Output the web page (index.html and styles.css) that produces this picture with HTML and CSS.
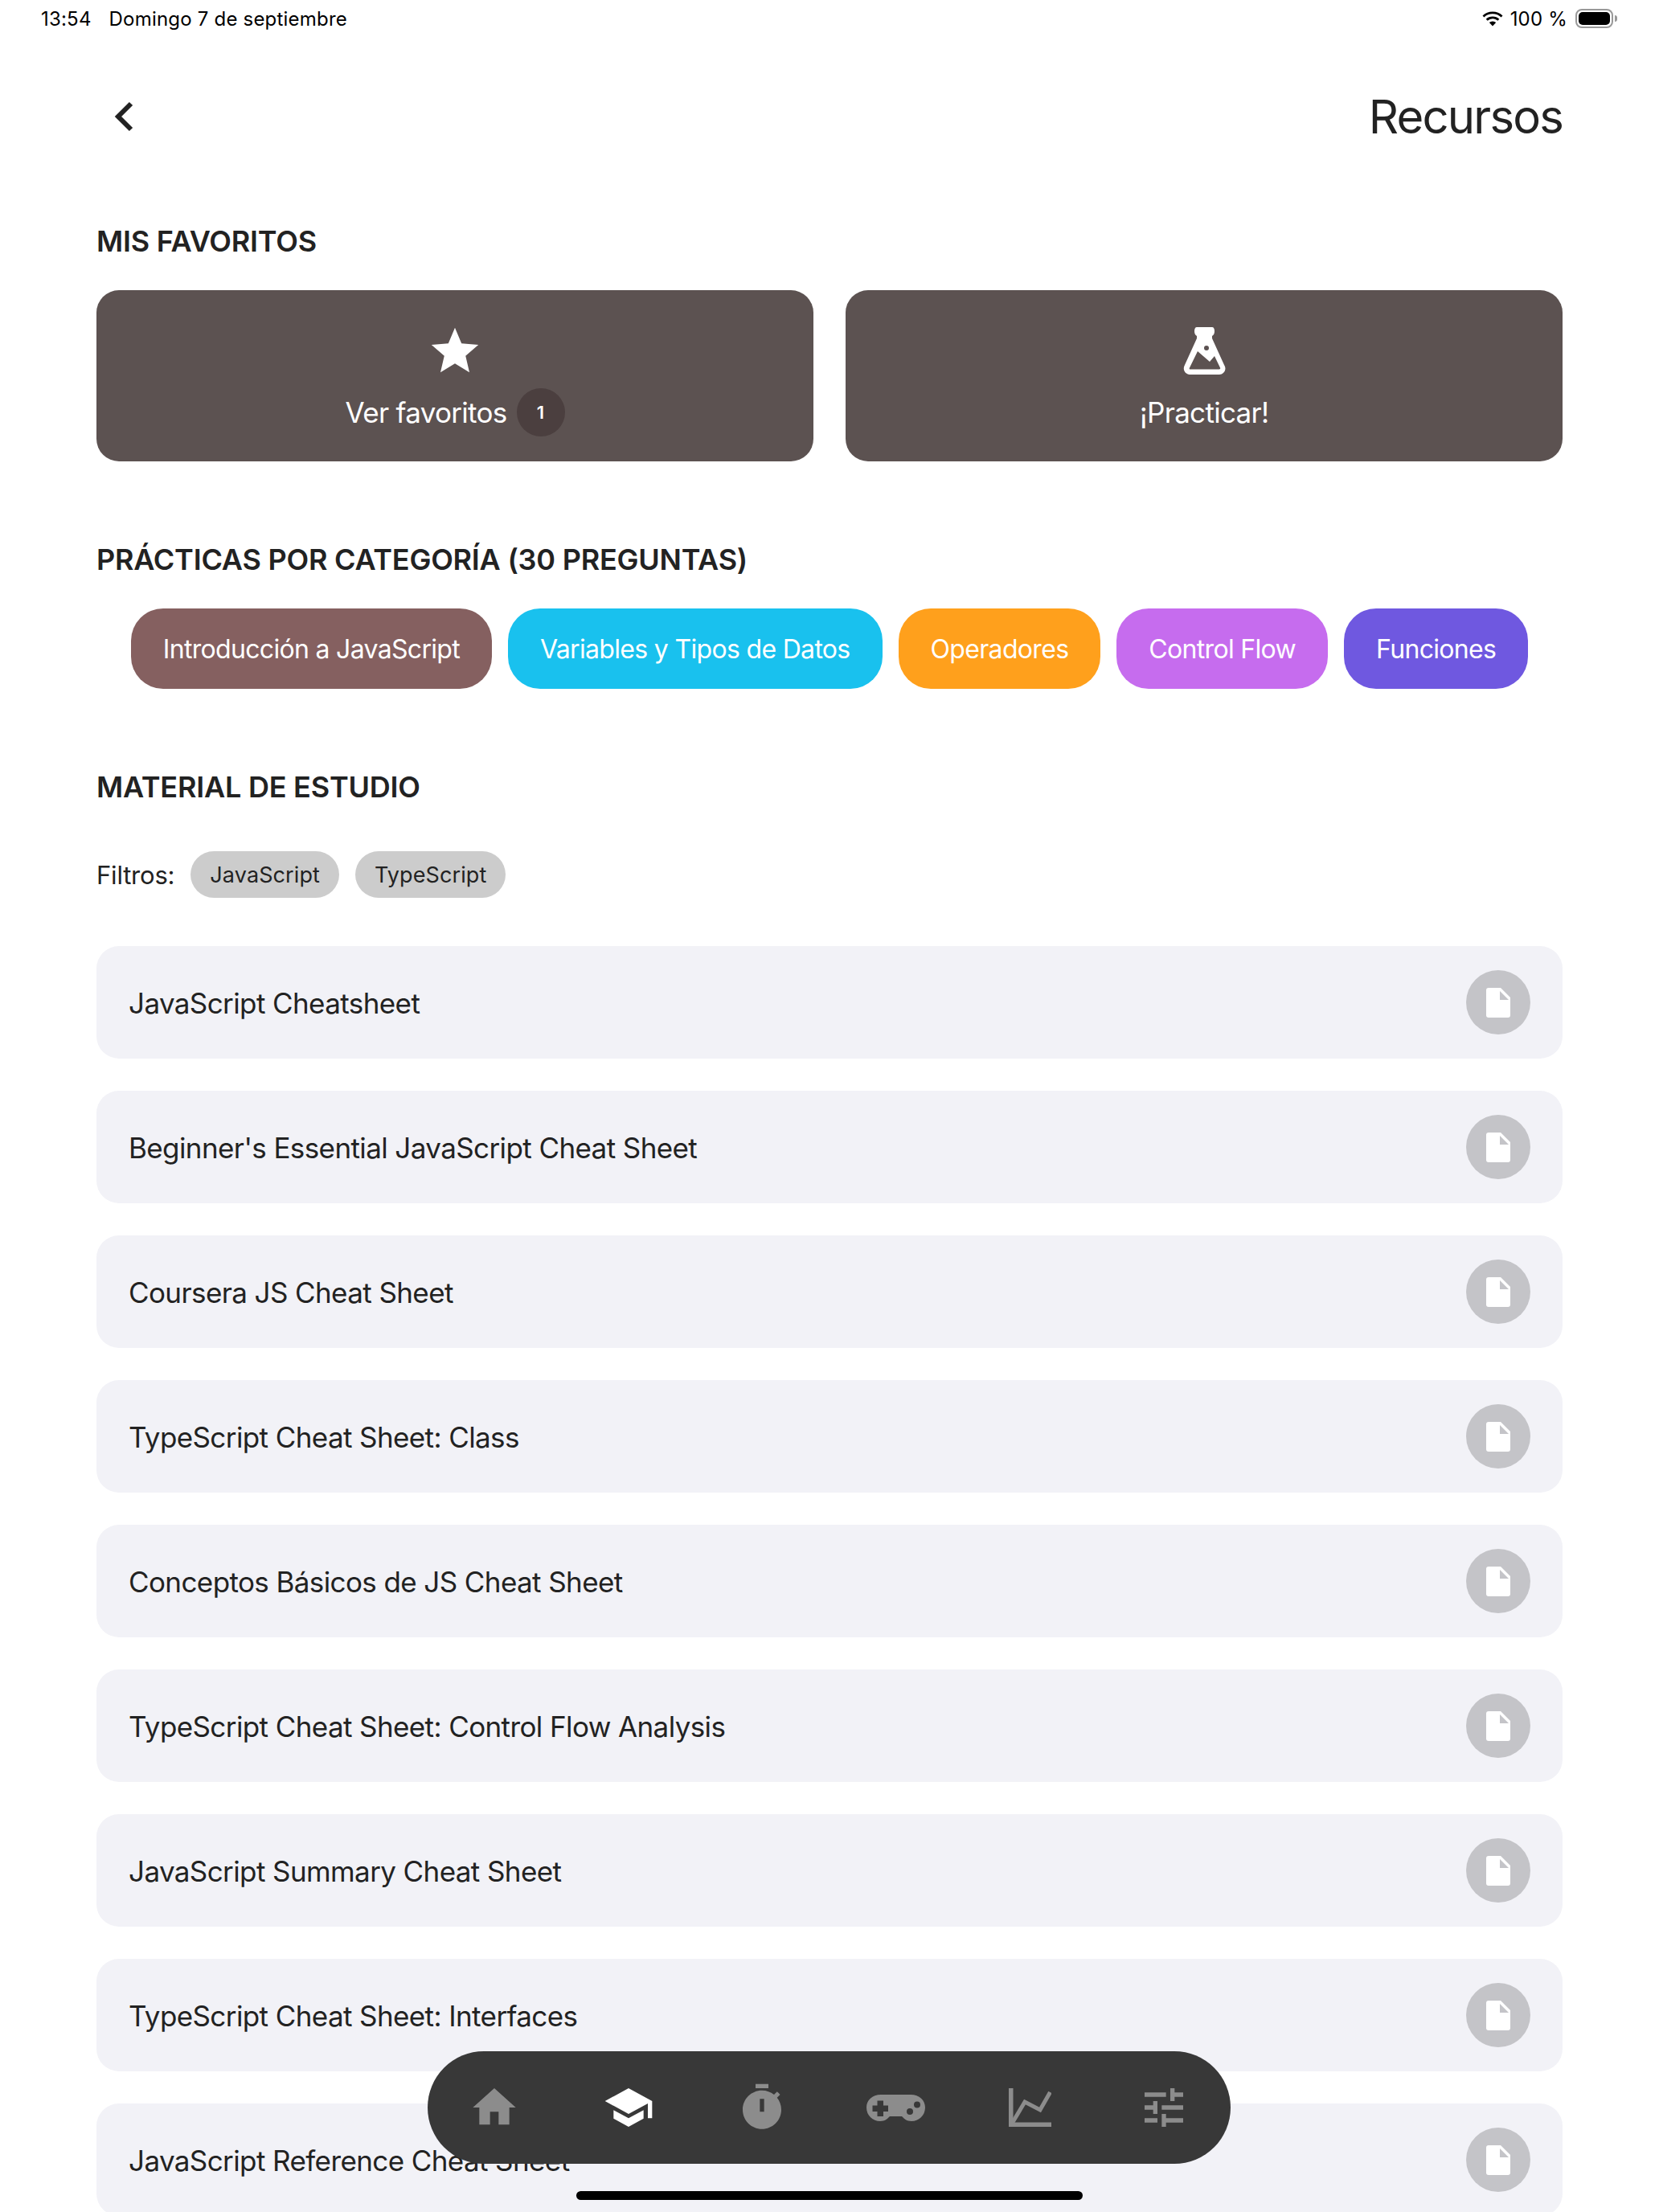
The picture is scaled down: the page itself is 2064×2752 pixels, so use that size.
FILE: index.html
```html
<!DOCTYPE html>
<html lang="es">
<head>
<meta charset="utf-8">
<title>Recursos</title>
<link rel="stylesheet" href="styles.css">
</head>
<body>
<div class="status">
  <div class="status-left"><span>13:54</span><span>Domingo 7 de septiembre</span></div>
  <div class="status-right">
    <svg class="wifi" viewBox="0 0 28 19"><path d="M14 3.2c4.1 0 7.8 1.6 10.6 4.2l1.9-2A18 18 0 0 0 14 .4 18 18 0 0 0 1.500 5.400l1.900 2A15.300 15.300 0 0 1 14 3.200zM14 9.300c2.400 0 4.600.9 6.300 2.500l2-2.100A12 12 0 0 0 14 6.400a12 12 0 0 0-8.300 3.300l2 2.100A9.200 9.200 0 0 1 14 9.300zM14 12.400a6 6 0 0 0-4.200 1.700L14 18.600l4.200-4.500A6 6 0 0 0 14 12.400z"/></svg>
    <span class="pct">100 %</span>
    <span class="battery"><span class="battery-fill"></span></span>
    <span class="battery-nub"></span>
  </div>
</div>

<main class="page">
  <header class="top">
    <svg class="back" viewBox="0 0 24 38"><path d="M21 3 5 19l16 16" /></svg>
    <h1 class="title">Recursos</h1>
  </header>

  <h2 class="heading">MIS FAVORITOS</h2>
  <section class="cards">
    <div class="card">
      <svg class="card-icon" viewBox="0 0 24 24"><path d="M12 17.270 18.180 21l-1.640-7.030L22 9.240l-7.190-.61L12 2 9.190 8.630 2 9.240l5.460 4.730L5.820 21z"/></svg>
      <div class="card-label"><span>Ver favoritos</span><span class="badge">1</span></div>
    </div>
    <div class="card">
      <svg class="flask" viewBox="0 0 53 59"><path fill-rule="evenodd" d="M17 0H36C38 0 39 2 39 5C39 8 38 10 36 11V14L51 47C55 53 50 59 45 59H8C3 59-1.500 53 2 47L17 14V11C15 10 14 8 14 5C14 2 15 0 17 0ZM8 50.500C7.500 51.500 7.500 52.500 9 52.500H45C46 52.500 46.500 51.500 46 50.500L39 36 33 43 18 30ZM29 23a3 3 0 1 0 0 6 3 3 0 0 0 0-6Z"/></svg>
      <div class="card-label"><span>¡Practicar!</span></div>
    </div>
  </section>

  <h2 class="heading heading-next">PRÁCTICAS POR CATEGORÍA (30 PREGUNTAS)</h2>
  <section class="pills">
    <div class="pill pill-brown">Introducción a JavaScript</div>
    <div class="pill pill-cyan">Variables y Tipos de Datos</div>
    <div class="pill pill-orange">Operadores</div>
    <div class="pill pill-pink">Control Flow</div>
    <div class="pill pill-violet">Funciones</div>
  </section>

  <h2 class="heading heading-next">MATERIAL DE ESTUDIO</h2>
  <section class="filters">
    <span class="filters-label">Filtros:</span>
    <span class="chip">JavaScript</span>
    <span class="chip">TypeScript</span>
  </section>

  <section class="list">
    <div class="row"><span class="row-text">JavaScript Cheatsheet</span><span class="doc"><svg viewBox="0 0 30 37"><path d="M3 0H18L30 12V34a3 3 0 0 1-3 3H3a3 3 0 0 1-3-3V3a3 3 0 0 1 3-3Z"/><path class="fold" d="M17 4V15H28Z"/></svg></span></div>
    <div class="row"><span class="row-text">Beginner's Essential JavaScript Cheat Sheet</span><span class="doc"><svg viewBox="0 0 30 37"><path d="M3 0H18L30 12V34a3 3 0 0 1-3 3H3a3 3 0 0 1-3-3V3a3 3 0 0 1 3-3Z"/><path class="fold" d="M17 4V15H28Z"/></svg></span></div>
    <div class="row"><span class="row-text">Coursera JS Cheat Sheet</span><span class="doc"><svg viewBox="0 0 30 37"><path d="M3 0H18L30 12V34a3 3 0 0 1-3 3H3a3 3 0 0 1-3-3V3a3 3 0 0 1 3-3Z"/><path class="fold" d="M17 4V15H28Z"/></svg></span></div>
    <div class="row"><span class="row-text">TypeScript Cheat Sheet: Class</span><span class="doc"><svg viewBox="0 0 30 37"><path d="M3 0H18L30 12V34a3 3 0 0 1-3 3H3a3 3 0 0 1-3-3V3a3 3 0 0 1 3-3Z"/><path class="fold" d="M17 4V15H28Z"/></svg></span></div>
    <div class="row"><span class="row-text">Conceptos Básicos de JS Cheat Sheet</span><span class="doc"><svg viewBox="0 0 30 37"><path d="M3 0H18L30 12V34a3 3 0 0 1-3 3H3a3 3 0 0 1-3-3V3a3 3 0 0 1 3-3Z"/><path class="fold" d="M17 4V15H28Z"/></svg></span></div>
    <div class="row"><span class="row-text">TypeScript Cheat Sheet: Control Flow Analysis</span><span class="doc"><svg viewBox="0 0 30 37"><path d="M3 0H18L30 12V34a3 3 0 0 1-3 3H3a3 3 0 0 1-3-3V3a3 3 0 0 1 3-3Z"/><path class="fold" d="M17 4V15H28Z"/></svg></span></div>
    <div class="row"><span class="row-text">JavaScript Summary Cheat Sheet</span><span class="doc"><svg viewBox="0 0 30 37"><path d="M3 0H18L30 12V34a3 3 0 0 1-3 3H3a3 3 0 0 1-3-3V3a3 3 0 0 1 3-3Z"/><path class="fold" d="M17 4V15H28Z"/></svg></span></div>
    <div class="row"><span class="row-text">TypeScript Cheat Sheet: Interfaces</span><span class="doc"><svg viewBox="0 0 30 37"><path d="M3 0H18L30 12V34a3 3 0 0 1-3 3H3a3 3 0 0 1-3-3V3a3 3 0 0 1 3-3Z"/><path class="fold" d="M17 4V15H28Z"/></svg></span></div>
    <div class="row"><span class="row-text">JavaScript Reference Cheat Sheet</span><span class="doc"><svg viewBox="0 0 30 37"><path d="M3 0H18L30 12V34a3 3 0 0 1-3 3H3a3 3 0 0 1-3-3V3a3 3 0 0 1 3-3Z"/><path class="fold" d="M17 4V15H28Z"/></svg></span></div>
  </section>
</main>

<nav class="tabbar">
  <div class="tab"><svg class="tab-icon" viewBox="0 0 24 24"><path d="M10 20v-6h4v6h5v-8h3L12 3 2 12h3v8z"/></svg></div>
  <div class="tab tab-active"><svg class="tab-icon" viewBox="0 0 24 24"><path d="M5 13.180v4L12 21l7-3.820v-4L12 17l-7-3.820zM12 3 1 9l11 6 9-4.910V17h2V9L12 3z"/></svg></div>
  <div class="tab"><svg class="tab-icon" viewBox="0 0 24 24"><path fill-rule="evenodd" d="M15 1H9v2h6V1zm4.030 6.390 1.420-1.420c-.43-.51-.9-.99-1.410-1.410l-1.420 1.420C16.070 4.740 14.120 4 12 4c-4.970 0-9 4.030-9 9s4.020 9 9 9 9-4.030 9-9c0-2.120-.74-4.070-1.970-5.610zM13 14h-2V8h2v6z"/></svg></div>
  <div class="tab"><svg class="pad" viewBox="0 0 73 33"><path fill-rule="evenodd" d="M18 0H55C66 0 73 7 73 16 73 26 65 33 56 33 50 33 47 30 44 27H29C26 30 23 33 17 33 8 33 0 26 0 16 0 7 7 0 18 0ZM13.500 7.500V13.500H7.500V21H13.500V27H21V21H27V13.500H21V7.500ZM63 8.500a4 4 0 1 0 0 8 4 4 0 0 0 0-8ZM54 17a4 4 0 1 0 0 8 4 4 0 0 0 0-8Z"/></svg></div>
  <div class="tab"><svg class="chart" viewBox="0 0 53 48"><path d="M0 0H5.500V42.500H53V48H0Z"/><path class="chart-line" d="M4.500 43 20 17 39 27 51.500 5"/></svg></div>
  <div class="tab"><svg class="tab-icon" viewBox="0 0 24 24"><path d="M3 17v2h6v-2H3zM3 5v2h10V5H3zm10 16v-2h8v-2h-8v-2h-2v6h2zM7 9v2H3v2h4v2h2V9H7zm14 4v-2H11v2h10zm-6-4h2V7h4V5h-4V3h-2v6z"/></svg></div>
</nav>
<div class="home-indicator"></div>
</body>
</html>
```

FILE: styles.css
```css
* { box-sizing: border-box; }

html, body {
  margin: 0;
  height: 2752px;
  overflow: hidden;
  background: #fff;
}

body {
  position: relative;
  font-family: Inter, "Liberation Sans", sans-serif;
  color: #222;
}

.status {
  height: 46px;
  margin-bottom: 2px;
  padding: 0 51px;
  display: flex;
  align-items: center;
  justify-content: space-between;
  font-size: 24px;
  letter-spacing: 0.2px;
  color: #000;
}

.status-left { display: flex; gap: 22px; }

.status-right {
  display: flex;
  align-items: center;
  margin-right: 1px;
}

.wifi { width: 28px; height: 19px; margin-right: 8px; }
.pct { margin-right: 10px; }

.battery {
  width: 47px;
  height: 24px;
  border: 2px solid #999;
  border-radius: 8px;
  padding: 2px;
  display: block;
}

.battery-fill {
  display: block;
  height: 100%;
  background: #000;
  border-radius: 5px;
}

.battery-nub {
  width: 3px;
  height: 8px;
  margin-left: 2px;
  background: #999;
  border-radius: 0 3px 3px 0;
}

.page { padding: 0 120px; }

.top {
  height: 194px;
  margin-bottom: 36px;
  display: flex;
  align-items: center;
  justify-content: space-between;
}

.back {
  width: 24px;
  height: 38px;
  margin-left: 22px;
  fill: none;
  stroke: #222;
  stroke-width: 6;
}

.title {
  margin: 0;
  font-size: 58px;
  font-weight: 400;
  letter-spacing: -1.8px;
  line-height: 72px;
}

.heading {
  margin: 0 0 39px;
  font-size: 36px;
  font-weight: 600;
  letter-spacing: -0.22px;
  line-height: 44px;
}

.heading-next { margin-top: 100px; }

.cards {
  display: grid;
  grid-template-columns: 1fr 1fr;
  gap: 40px;
}

.card {
  height: 213px;
  background: #5c5251;
  border-radius: 28px;
  color: #fff;
  display: flex;
  flex-direction: column;
  align-items: center;
  padding-top: 41px;
}

.card svg { fill: #fff; display: block; }
.card-icon { width: 70px; height: 70px; }
.flask { width: 53px; height: 59px; margin-top: 5px; margin-bottom: 6px; }

.card-label {
  margin-top: 11px;
  height: 60px;
  display: flex;
  align-items: center;
  gap: 12px;
  font-size: 35px;
  letter-spacing: -0.7px;
}

.badge {
  width: 60px;
  height: 60px;
  border-radius: 50%;
  background: #4b3f3f;
  display: flex;
  align-items: center;
  justify-content: center;
  font-size: 22px;
  font-weight: 600;
  letter-spacing: 0;
}

.pills {
  display: flex;
  justify-content: center;
  gap: 20px;
}

.pill {
  height: 100px;
  padding: 0 40px;
  border-radius: 40px;
  display: flex;
  align-items: center;
  color: #fff;
  font-size: 32px;
  letter-spacing: -0.68px;
  white-space: nowrap;
}

.pill-brown { background: #856060; }
.pill-cyan { background: #19c1ee; }
.pill-orange { background: #ffa01c; }
.pill-pink { background: #c66cee; }
.pill-violet { background: #6f58e0; }

.filters {
  margin-top: 58px;
  display: flex;
  align-items: center;
  gap: 20px;
  font-size: 31px;
  letter-spacing: -0.2px;
}

.chip {
  height: 58px;
  padding: 0 24px;
  border-radius: 29px;
  background: #ccc;
  display: flex;
  align-items: center;
  font-size: 27px;
  letter-spacing: 0.1px;
}

.list {
  margin-top: 60px;
  display: flex;
  flex-direction: column;
  gap: 40px;
}

.row {
  height: 140px;
  flex: none;
  padding: 0 40px;
  background: #f2f2f7;
  border-radius: 28px;
  display: flex;
  align-items: center;
  justify-content: space-between;
  font-size: 35px;
  letter-spacing: -0.6px;
}

.row-text { padding-top: 2px; }

.doc {
  width: 80px;
  height: 80px;
  border-radius: 50%;
  background: #c4c4c8;
  display: flex;
  align-items: center;
  justify-content: center;
}

.doc svg { width: 30px; height: 37px; fill: #fff; }
.doc .fold { fill: #c4c4c8; }

.tabbar {
  position: absolute;
  left: 532px;
  top: 2552px;
  width: 999px;
  height: 140px;
  border-radius: 70px;
  background: #383838;
  display: grid;
  grid-template-columns: repeat(6, 1fr);
  align-items: center;
  justify-items: center;
}

.tab { display: flex; fill: #8c8c8c; }
.tab-active { fill: #fff; }
.tab-icon { width: 64px; height: 64px; }
.pad { width: 73px; height: 33px; }
.chart { width: 53px; height: 48px; }
.chart-line { fill: none; stroke: #8c8c8c; stroke-width: 5; }

.home-indicator {
  position: absolute;
  left: 717px;
  top: 2726px;
  width: 630px;
  height: 11px;
  border-radius: 6px;
  background: #000;
}
```
